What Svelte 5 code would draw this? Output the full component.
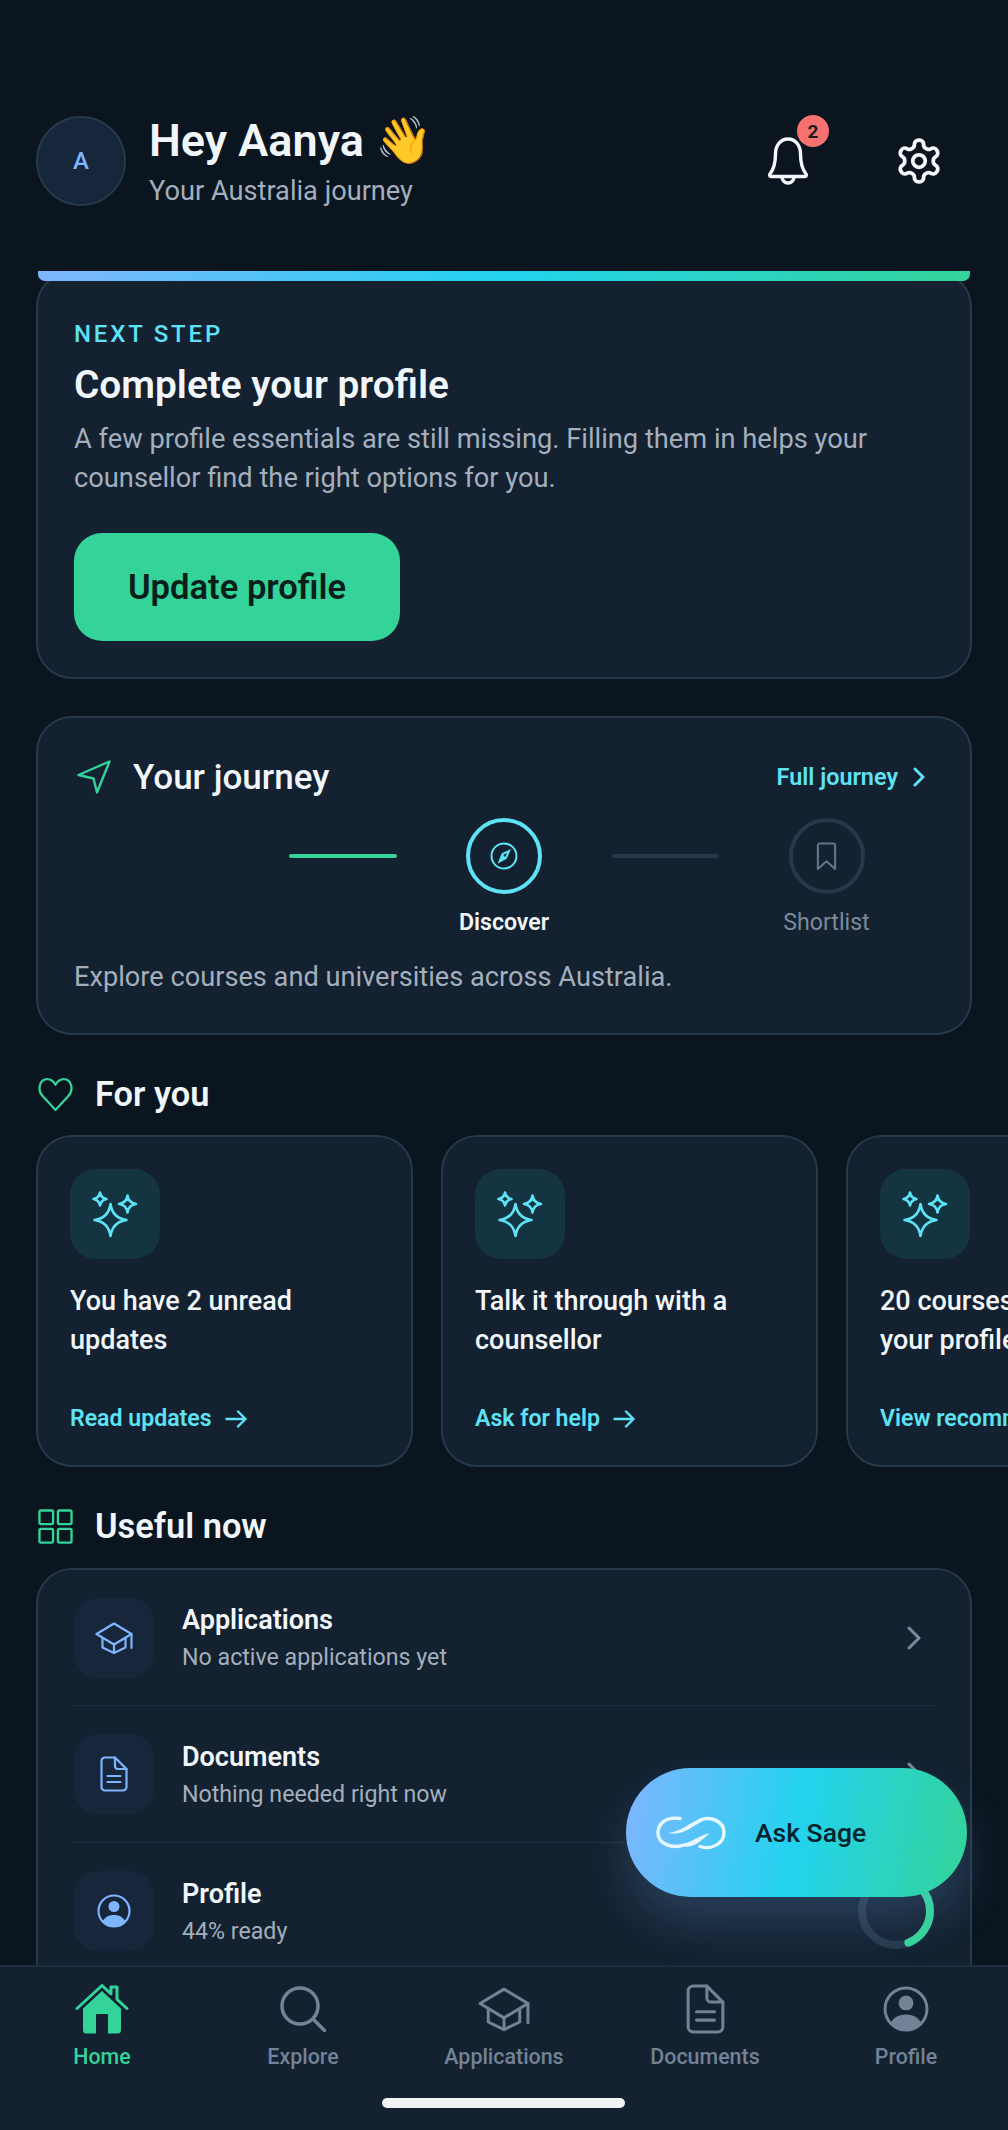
<script>
  const picks = [
    { title: 'You have 2 unread updates', link: 'Read updates' },
    { title: 'Talk it through with a counsellor', link: 'Ask for help' },
    { title: '20 courses matched to your profile', link: 'View recommendations' }
  ];

  const useful = [
    { icon: 'cap', title: 'Applications', sub: 'No active applications yet' },
    { icon: 'doc', title: 'Documents', sub: 'Nothing needed right now' },
    { icon: 'person', title: 'Profile', sub: '44% ready', progress: 44 }
  ];

  const tabs = [
    { icon: 'home', label: 'Home', active: true },
    { icon: 'search', label: 'Explore' },
    { icon: 'cap', label: 'Applications' },
    { icon: 'doc', label: 'Documents' },
    { icon: 'person', label: 'Profile' }
  ];

  const ringLength = 2 * Math.PI * 34;
</script>

{#snippet glyph(name)}
  {#if name === 'cap'}
    <svg class="ico" viewBox="0 0 38 32" fill="none" stroke="currentColor" stroke-width="2.200" stroke-linejoin="round" stroke-linecap="round">
      <path d="M1.500 12 19 1.500 36.500 12 19 22.500Z" />
      <path d="M7.500 16v9.500L19 31l11.500-5.500V16" />
      <path d="M19 22.500V31" />
      <path d="M36.500 12v14" />
    </svg>
  {:else if name === 'doc'}
    <svg class="ico" viewBox="0 0 28 36" fill="none" stroke="currentColor" stroke-width="2.200" stroke-linejoin="round" stroke-linecap="round">
      <path d="M5 1.500h10L26.500 13v18a3.500 3.500 0 0 1-3.500 3.500H5A3.500 3.500 0 0 1 1.500 31V5A3.500 3.500 0 0 1 5 1.500Z" />
      <path d="M15 1.500V10a3 3 0 0 0 3 3h8.500" />
      <path d="M7.500 20h13M7.500 26h13" />
    </svg>
  {:else if name === 'person'}
    <svg class="ico" viewBox="0 0 34 34">
      <circle cx="17" cy="17" r="15.500" fill="none" stroke="currentColor" stroke-width="2.200" />
      <circle cx="17" cy="12.500" r="5.500" fill="currentColor" />
      <path d="M5.500 27.500C8 23 12 21 17 21s9 2 11.500 6.500A15.500 15.500 0 0 1 17 32.500 15.500 15.500 0 0 1 5.500 27.500Z" fill="currentColor" />
    </svg>
  {:else if name === 'home'}
    <svg class="ico" viewBox="0 0 54 50">
      <path d="M2 24.500 27 1.500l9 8.300V3h6v12.300l10 9.200" fill="none" stroke="currentColor" stroke-width="3" stroke-linecap="round" stroke-linejoin="round" />
      <path d="M27 7 8 24.500V46a3.500 3.500 0 0 0 3.500 3.500H21V31a1 1 0 0 1 1-1h10a1 1 0 0 1 1 1v18.500h9.500A3.500 3.500 0 0 0 46 46V24.500Z" fill="currentColor" />
    </svg>
  {:else if name === 'search'}
    <svg class="ico" viewBox="0 0 46 46" fill="none" stroke="currentColor" stroke-width="3.500" stroke-linecap="round">
      <circle cx="20" cy="20" r="18" />
      <path d="m33 33 11.500 11.500" />
    </svg>
  {/if}
{/snippet}

{#snippet sparkles()}
  <svg class="sparkles" viewBox="0 0 50 50" fill="none" stroke="#5ee2f5" stroke-width="2.600" stroke-linejoin="round">
    <path d="M20.500 15Q22.500 29 36.500 31 22.500 33 20.500 47 18.500 33 4.500 31 18.500 29 20.500 15Z" />
    <path d="M10 3.500Q11 9 16.500 10 11 11 10 16.500 9 11 3.500 10 9 9 10 3.500Z" />
    <path d="M37.500 6.500Q38.500 14 46 15 38.500 16 37.500 23.500 36.500 16 29 15 36.500 14 37.500 6.500Z" />
  </svg>
{/snippet}

<div class="screen">
  <main class="scroll">
    <header class="top">
      <div class="avatar">A</div>
      <div class="hello">
        <h1>Hey Aanya <span class="wave">👋</span></h1>
        <p>Your Australia journey</p>
      </div>
      <div class="actions">
        <button class="icon-btn" aria-label="Notifications">
          <svg class="bell" viewBox="0 0 42 48" fill="none" stroke="#f4f8fc" stroke-width="3.400" stroke-linejoin="round" stroke-linecap="round">
            <path d="M21 2C13 2 8.500 9 8.500 17c0 10-2 15.500-5.500 20-.8 1-.3 2.500 1 2.500h34c1.300 0 1.800-1.500 1-2.500-3.500-4.500-5.500-10-5.500-20C33.500 9 29 2 21 2Z" />
            <path d="M15 40a6 6 0 0 0 12 0" />
          </svg>
          <span class="badge">2</span>
        </button>
        <button class="icon-btn" aria-label="Settings">
          <svg class="gear" viewBox="0 0 24 24" fill="none" stroke="#f4f8fc" stroke-width="1.800" stroke-linejoin="round" stroke-linecap="round">
            <path d="M12.220 2h-.44a2 2 0 0 0-2 2v.18a2 2 0 0 1-1 1.730l-.43.25a2 2 0 0 1-2 0l-.15-.08a2 2 0 0 0-2.730.73l-.22.38a2 2 0 0 0 .73 2.730l.15.1a2 2 0 0 1 1 1.720v.51a2 2 0 0 1-1 1.740l-.15.09a2 2 0 0 0-.73 2.730l.22.38a2 2 0 0 0 2.730.73l.15-.08a2 2 0 0 1 2 0l.43.25a2 2 0 0 1 1 1.730V20a2 2 0 0 0 2 2h.44a2 2 0 0 0 2-2v-.18a2 2 0 0 1 1-1.730l.43-.25a2 2 0 0 1 2 0l.15.08a2 2 0 0 0 2.730-.73l.22-.39a2 2 0 0 0-.73-2.730l-.15-.08a2 2 0 0 1-1-1.740v-.5a2 2 0 0 1 1-1.740l.15-.09a2 2 0 0 0 .73-2.730l-.22-.38a2 2 0 0 0-2.730-.73l-.15.08a2 2 0 0 1-2 0l-.43-.25a2 2 0 0 1-1-1.730V4a2 2 0 0 0-2-2z" />
            <circle cx="12" cy="12" r="3" />
          </svg>
        </button>
      </div>
    </header>

    <section class="card hero">
      <div class="hero-bar"></div>
      <span class="eyebrow">NEXT STEP</span>
      <h2>Complete your profile</h2>
      <p>A few profile essentials are still missing. Filling them in helps your counsellor find the right options for you.</p>
      <button class="primary">Update profile</button>
    </section>

    <section class="card journey">
      <div class="journey-head">
        <svg class="nav-arrow" viewBox="0 0 34 34" fill="none" stroke="#34d399" stroke-width="2.400" stroke-linejoin="round">
          <path d="M1.500 15 32.500 1.500 20 32.500 16.500 18.500Z" />
        </svg>
        <h3>Your journey</h3>
        <a class="more" href="#journey">Full journey
          <svg viewBox="0 0 12 20" fill="none" stroke="currentColor" stroke-width="3" stroke-linecap="round" stroke-linejoin="round"><path d="m2 2 8 8-8 8" /></svg>
        </a>
      </div>
      <div class="steps">
        <div class="step"></div>
        <div class="link done"></div>
        <div class="step">
          <div class="dot current">
            <svg viewBox="0 0 28 28" fill="none" stroke="#5ee2f5" stroke-width="2">
              <circle cx="14" cy="14" r="12.500" />
              <path d="M19 9l-3 7-6.500 3.500L12.500 12Z" />
              <path d="M12.500 12 16 16l-6.500 3.500Z" fill="#5ee2f5" stroke="none" />
            </svg>
          </div>
          <span class="current-label">Discover</span>
        </div>
        <div class="link"></div>
        <div class="step">
          <div class="dot">
            <svg viewBox="0 0 24 30" fill="none" stroke="#64748b" stroke-width="2.200" stroke-linejoin="round">
              <path d="M3 3.500A2 2 0 0 1 5 1.500h14a2 2 0 0 1 2 2V28l-9-8-9 8Z" />
            </svg>
          </div>
          <span>Shortlist</span>
        </div>
      </div>
      <p class="journey-note">Explore courses and universities across Australia.</p>
    </section>

    <div class="section-head for-you">
      <svg viewBox="0 0 34 33" fill="none" stroke="#34d399" stroke-width="2.200" stroke-linejoin="round">
        <path d="M17 31.500 4.500 18C-1 12 1.500 1.500 9 1.500c3.500 0 6 2 8 5.500 2-3.500 4.500-5.500 8-5.500 7.500 0 10 10.500 4.500 16.500Z" />
      </svg>
      <h3>For you</h3>
    </div>
    <div class="picks">
      {#each picks as pick}
        <article class="card pick">
          <div class="pick-icon">{@render sparkles()}</div>
          <h4>{pick.title}</h4>
          <a class="pick-link" href="#pick">{pick.link}
            <svg viewBox="0 0 22 18" fill="none" stroke="currentColor" stroke-width="2.400" stroke-linecap="round" stroke-linejoin="round"><path d="M1.500 9h19M13 1.500 20.500 9 13 16.500" /></svg>
          </a>
        </article>
      {/each}
    </div>

    <div class="section-head useful-head">
      <svg viewBox="0 0 36 36" fill="none" stroke="#34d399" stroke-width="2.400">
        <rect x="1.500" y="1.500" width="14" height="14" rx="1.500" />
        <rect x="20.500" y="1.500" width="14" height="14" rx="1.500" />
        <rect x="1.500" y="20.500" width="14" height="14" rx="1.500" />
        <rect x="20.500" y="20.500" width="14" height="14" rx="1.500" />
      </svg>
      <h3>Useful now</h3>
    </div>
    <section class="card useful">
      {#each useful as row}
        <div class="row">
          <div class="row-icon {row.icon}">{@render glyph(row.icon)}</div>
          <div class="row-text">
            <strong>{row.title}</strong>
            <span>{row.sub}</span>
          </div>
          {#if row.progress}
            <svg class="ring" viewBox="0 0 76 76" fill="none" stroke-width="8">
              <circle cx="38" cy="38" r="34" stroke="#26384a" />
              <circle cx="38" cy="38" r="34" stroke="#34d399" stroke-linecap="round" transform="rotate(-90 38 38)"
                stroke-dasharray="{ringLength * row.progress / 100} {ringLength}" />
            </svg>
          {:else}
            <svg class="chev" viewBox="0 0 14 24" fill="none" stroke="#7c8a9c" stroke-width="3" stroke-linecap="round" stroke-linejoin="round"><path d="m2 2 10 10L2 22" /></svg>
          {/if}
        </div>
      {/each}
    </section>
  </main>

  <button class="sage">
    <svg viewBox="0 0 70 36" fill="none" stroke="#e9f8ff" stroke-linecap="round">
      <path d="M24 3.500C9 1.500 2 9 2 18c0 11 14 16 26 12" stroke-width="3.400" />
      <path d="M44 5C56 .5 68 7 68 17.500 68 29 55 35 44 31.500" stroke-width="3.400" />
      <path d="M12 18C24 17 32 9 44 3.500L46 6.500C36 11 28 21 12 18Z" fill="#e9f8ff" stroke="none" />
      <path d="M28 28.500C36 27 40 22 54 18 46 24 40 33 28 31.500Z" fill="#e9f8ff" stroke="none" />
    </svg>
    <span>Ask Sage</span>
  </button>

  <nav class="tabs">
    {#each tabs as tab}
      <div class="tab" class:active={tab.active}>
        <div class="tab-icon {tab.icon}">{@render glyph(tab.icon)}</div>
        <span>{tab.label}</span>
      </div>
    {/each}
    <div class="home-bar"></div>
  </nav>
</div>

<style>
  :global(body) {
    margin: 0;
    background: #0a151f;
  }

  .screen {
    position: relative;
    height: 2130px;
    display: flex;
    flex-direction: column;
    overflow: hidden;
    background: #0a151f;
    color: #f1f6fb;
    font-family: Roboto, "Noto Sans", sans-serif;
  }

  h1, h2, h3, h4, p {
    margin: 0;
  }

  button {
    border: none;
    padding: 0;
    background: none;
    font: inherit;
    color: inherit;
  }

  a {
    text-decoration: none;
  }

  .scroll {
    flex: 1;
    min-height: 0;
    overflow: hidden;
    padding: 116px 36px 0;
    display: flex;
    flex-direction: column;
  }

  .top {
    display: flex;
    align-items: center;
    flex: none;
    height: 90px;
    margin-bottom: 65px;
  }

  .avatar {
    width: 90px;
    height: 90px;
    box-sizing: border-box;
    border-radius: 50%;
    background: #17263b;
    border: 2px solid #26384a;
    display: grid;
    place-items: center;
    color: #7fb5ff;
    font-size: 24px;
    font-weight: 500;
    margin-right: 23px;
  }

  .hello h1 {
    font-size: 45px;
    line-height: 52px;
    font-weight: 600;
    margin-bottom: 7px;
  }

  .wave {
    font-size: 46px;
  }

  .hello p {
    font-size: 27.200px;
    line-height: 34px;
    color: #a3afbd;
  }

  .actions {
    margin-left: auto;
    display: flex;
    gap: 85px;
    padding-right: 28px;
  }

  .icon-btn {
    position: relative;
    display: block;
  }

  .bell {
    display: block;
    width: 42px;
    height: 48px;
  }

  .gear {
    display: block;
    width: 50px;
    height: 50px;
  }

  .badge {
    position: absolute;
    top: -21px;
    left: 30px;
    width: 32px;
    height: 32px;
    border-radius: 50%;
    background: #f87171;
    color: #1a1a1a;
    font-size: 19px;
    font-weight: 700;
    display: grid;
    place-items: center;
  }

  .card {
    box-sizing: border-box;
    background: #132130;
    border: 2px solid #26384a;
    border-radius: 36px;
  }

  .hero {
    position: relative;
    flex: none;
    height: 408px;
    padding: 46px 36px 0;
    overflow: visible;
  }

  .hero-bar {
    position: absolute;
    top: -2px;
    left: 0;
    right: 0;
    height: 10px;
    border-radius: 0 0 7px 7px;
    background: linear-gradient(90deg, #7fb5ff, #22d3ee 50%, #34d399);
  }

  .eyebrow {
    display: block;
    font-size: 24px;
    line-height: 30px;
    font-weight: 500;
    letter-spacing: 2.800px;
    color: #5ee2f5;
  }

  .hero h2 {
    margin-top: 13px;
    font-size: 38.800px;
    line-height: 46px;
    font-weight: 600;
  }

  .hero p {
    margin-top: 12px;
    font-size: 27.250px;
    line-height: 39px;
    color: #a3afbd;
  }

  .primary {
    display: block;
    margin-top: 35px;
    width: 326px;
    height: 108px;
    border-radius: 28px;
    background: #34d399;
    color: #0a1f1c;
    font-size: 34.600px;
    font-weight: 600;
  }

  .journey {
    flex: none;
    height: 319px;
    margin-top: 37px;
    padding: 34px 36px 0;
  }

  .journey-head {
    display: flex;
    align-items: center;
    height: 50px;
  }

  .nav-arrow {
    width: 34px;
    height: 34px;
    margin-right: 22px;
    margin-left: 3px;
  }

  .journey-head h3 {
    font-size: 35px;
    font-weight: 500;
  }

  .more {
    margin-left: auto;
    padding-right: 9px;
    display: flex;
    align-items: center;
    gap: 15px;
    color: #5ee2f5;
    font-size: 23.400px;
    font-weight: 600;
  }

  .more svg {
    width: 12px;
    height: 20px;
  }

  .steps {
    display: flex;
    align-items: flex-start;
    margin-top: 16px;
  }

  .step {
    flex: 2;
    display: flex;
    flex-direction: column;
    align-items: center;
    gap: 15px;
    font-size: 23.120px;
    line-height: 28px;
    color: #7c8a9c;
  }

  .link {
    flex: 1;
    height: 4px;
    margin-top: 36px;
    border-radius: 2px;
    background: #26384a;
  }

  .link.done {
    background: #34d399;
  }

  .dot {
    width: 76px;
    height: 76px;
    box-sizing: border-box;
    border-radius: 50%;
    border: 4px solid #26384a;
    display: grid;
    place-items: center;
  }

  .dot svg {
    width: 23px;
    height: 29px;
  }

  .dot.current {
    border-color: #5ee2f5;
  }

  .dot.current svg {
    width: 28px;
    height: 28px;
  }

  .current-label {
    color: #f1f6fb;
    font-weight: 600;
  }

  .journey-note {
    margin-top: 22px;
    font-size: 27.200px;
    line-height: 36px;
    color: #a3afbd;
  }

  .section-head {
    flex: none;
    display: flex;
    align-items: center;
    gap: 22px;
    height: 44px;
  }

  .section-head svg {
    width: 35px;
    height: 35px;
    margin-left: 2px;
  }

  .section-head h3 {
    font-size: 34.400px;
    font-weight: 600;
  }

  .for-you {
    margin-top: 37px;
  }

  .picks {
    flex: none;
    display: flex;
    gap: 28px;
    margin-top: 19px;
    margin-right: -36px;
  }

  .pick {
    flex: none;
    width: 377px;
    height: 332px;
    padding: 32px;
    position: relative;
  }

  .pick-icon {
    width: 90px;
    height: 90px;
    border-radius: 26px;
    background: #143441;
    display: grid;
    place-items: center;
  }

  .sparkles {
    width: 50px;
    height: 50px;
  }

  .pick h4 {
    margin-top: 23px;
    font-size: 27px;
    line-height: 39px;
    font-weight: 500;
  }

  .pick-link {
    position: absolute;
    left: 32px;
    bottom: 31px;
    display: flex;
    align-items: center;
    gap: 13px;
    color: #5ee2f5;
    font-size: 23.120px;
    line-height: 30px;
    font-weight: 600;
    white-space: nowrap;
  }

  .pick-link svg {
    width: 22px;
    height: 18px;
  }

  .useful-head {
    margin-top: 37px;
  }

  .useful {
    flex: none;
    margin-top: 20px;
    padding: 0 36px 60px;
  }

  .row {
    display: flex;
    align-items: center;
    height: 136px;
    border-bottom: 1px solid #1f2f40;
  }

  .row:first-child {
    height: 135px;
  }

  .row-icon {
    flex: none;
    width: 80px;
    height: 80px;
    border-radius: 24px;
    background: #17263b;
    display: grid;
    place-items: center;
    color: #7fb5ff;
  }

  .row-icon :global(.ico) {
    display: block;
  }

  .row-icon.cap :global(.ico) {
    width: 38px;
    height: 32px;
  }

  .row-icon.doc :global(.ico) {
    width: 28px;
    height: 36px;
  }

  .row-icon.person :global(.ico) {
    width: 34px;
    height: 34px;
  }

  .row-text {
    margin-left: 28px;
    display: flex;
    flex-direction: column;
    gap: 5px;
  }

  .row-text strong {
    font-size: 27px;
    line-height: 34px;
    font-weight: 600;
  }

  .row-text span {
    font-size: 23.200px;
    line-height: 30px;
    color: #a3afbd;
  }

  .chev {
    margin-left: auto;
    margin-right: 13px;
    width: 14px;
    height: 24px;
  }

  .ring {
    margin-left: auto;
    width: 76px;
    height: 76px;
  }

  .sage {
    position: absolute;
    left: 626px;
    top: 1768px;
    width: 341px;
    height: 129px;
    border-radius: 65px;
    background: linear-gradient(100deg, #7fb5ff, #22d3ee 50%, #34d399);
    box-shadow: 0 26px 48px rgba(127, 181, 255, 0.2);
    display: flex;
    align-items: center;
    padding-left: 30px;
    box-sizing: border-box;
    color: #06222a;
    font-size: 26.500px;
    font-weight: 500;
  }

  .sage svg {
    width: 70px;
    height: 36px;
    margin-right: 29px;
  }

  .tabs {
    position: relative;
    flex: none;
    height: 165px;
    box-sizing: border-box;
    background: #132130;
    border-top: 2px solid #1e2e3f;
    display: grid;
    grid-template-columns: repeat(5, 201px);
    justify-content: center;
  }

  .tab {
    display: flex;
    flex-direction: column;
    align-items: center;
    padding-top: 17px;
    color: #738296;
    font-size: 21.400px;
    font-weight: 500;
  }

  .tab.active {
    color: #34d399;
  }

  .tab-icon {
    height: 50px;
    margin-bottom: 10px;
    display: flex;
    align-items: center;
  }

  .tab-icon :global(.ico) {
    display: block;
  }

  .tab-icon.home :global(.ico) {
    width: 54px;
    height: 50px;
  }

  .tab-icon.search :global(.ico) {
    width: 46px;
    height: 46px;
  }

  .tab-icon.cap :global(.ico) {
    width: 52px;
    height: 46px;
  }

  .tab-icon.doc :global(.ico) {
    width: 39px;
    height: 50px;
  }

  .tab-icon.person :global(.ico) {
    width: 46px;
    height: 46px;
  }

  .home-bar {
    position: absolute;
    left: 382px;
    bottom: 22px;
    width: 243px;
    height: 10px;
    border-radius: 5px;
    background: #f1f3f5;
  }
</style>
